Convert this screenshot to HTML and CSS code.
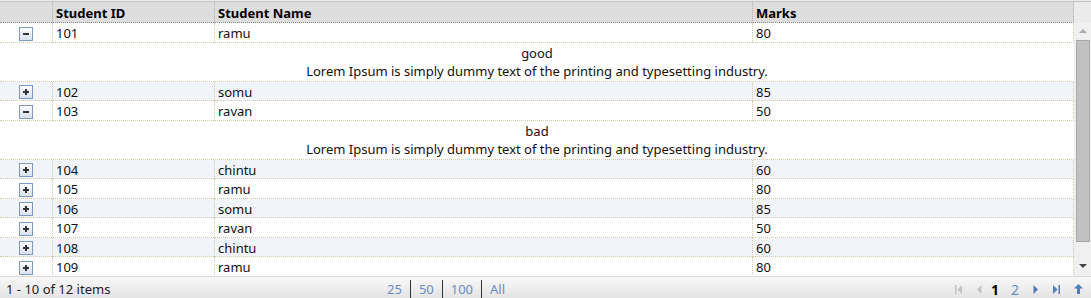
FILE: index.html
```html
<!DOCTYPE html>
<html lang="en">
<head>
  <meta charset="UTF-8">
  <title>Students</title>
  <link rel="stylesheet" href="styles.css">
</head>
<body>

  <div class="grid">
    <div class="grid-header">
      <table class="grid-table">
        <colgroup>
          <col class="col-hier"><col class="col-id"><col class="col-name"><col class="col-marks">
        </colgroup>
        <thead>
          <tr>
            <th class="hier"></th>
            <th>Student ID</th>
            <th>Student Name</th>
            <th>Marks</th>
          </tr>
        </thead>
      </table>
      <div class="scroll-corner"></div>
    </div>

    <div class="grid-content">
      <table class="grid-table">
        <colgroup>
          <col class="col-hier"><col class="col-id"><col class="col-name"><col class="col-marks">
        </colgroup>
        <tbody>
          <tr>
            <td class="hier"><span class="toggle minus"></span></td>
            <td>101</td><td>ramu</td><td>80</td>
          </tr>
          <tr class="detail">
            <td colspan="4">good<br>Lorem Ipsum is simply dummy text of the printing and typesetting industry.</td>
          </tr>
          <tr class="alt">
            <td class="hier"><span class="toggle plus"></span></td>
            <td>102</td><td>somu</td><td>85</td>
          </tr>
          <tr>
            <td class="hier"><span class="toggle minus"></span></td>
            <td>103</td><td>ravan</td><td>50</td>
          </tr>
          <tr class="detail">
            <td colspan="4">bad<br>Lorem Ipsum is simply dummy text of the printing and typesetting industry.</td>
          </tr>
          <tr class="alt">
            <td class="hier"><span class="toggle plus"></span></td>
            <td>104</td><td>chintu</td><td>60</td>
          </tr>
          <tr>
            <td class="hier"><span class="toggle plus"></span></td>
            <td>105</td><td>ramu</td><td>80</td>
          </tr>
          <tr class="alt">
            <td class="hier"><span class="toggle plus"></span></td>
            <td>106</td><td>somu</td><td>85</td>
          </tr>
          <tr>
            <td class="hier"><span class="toggle plus"></span></td>
            <td>107</td><td>ravan</td><td>50</td>
          </tr>
          <tr class="alt">
            <td class="hier"><span class="toggle plus"></span></td>
            <td>108</td><td>chintu</td><td>60</td>
          </tr>
          <tr>
            <td class="hier"><span class="toggle plus"></span></td>
            <td>109</td><td>ramu</td><td>80</td>
          </tr>
        </tbody>
      </table>

      <div class="vscroll">
        <span class="sb-arrow up"></span>
        <div class="sb-thumb"></div>
        <span class="sb-arrow down"></span>
      </div>
    </div>

    <div class="pager">
      <span class="pager-info">1 - 10 of 12 items</span>
      <span class="pager-sizes">
        <a>25</a><a>50</a><a>100</a><a>All</a>
      </span>
      <span class="pager-nav">
        <svg class="nav-icon off" width="8" height="9" viewBox="0 0 8 9"><rect x="0" y="0" width="1.5" height="9"/><path d="M7 0v9L2.5 4.5z"/></svg>
        <svg class="nav-icon off prev" width="5" height="9" viewBox="0 0 5 9"><path d="M4.5 0v9L0 4.5z"/></svg>
        <span class="page current">1</span>
        <span class="page">2</span>
        <svg class="nav-icon" width="5" height="9" viewBox="0 0 5 9"><path d="M0.5 0v9L5 4.5z"/></svg>
        <svg class="nav-icon" width="8" height="9" viewBox="0 0 8 9"><path d="M1 0v9L5.5 4.5z"/><rect x="6.5" y="0" width="1.5" height="9"/></svg>
        <svg class="nav-icon top" width="9" height="10" viewBox="0 0 9 10"><path d="M4.5 0L9 4.5H6V10H3V4.5H0z"/></svg>
      </span>
    </div>
  </div>

</body>
</html>
```

FILE: styles.css
```css
body {
  margin: 0;
  background: #fff;
  font-family: "Noto Sans", "Open Sans", sans-serif;
  font-size: 13px;
  color: #111;
}
.grid {
  width: 1091px;
  height: 298px;
  display: flex;
  flex-direction: column;
  overflow: hidden;
}
.grid-header {
  display: flex;
  padding-top: 2px;
  background: linear-gradient(#ececec 0 1px, #c4c4c4 1px 2px, #dddddd 2px);
}
.scroll-corner {
  width: 17px;
  background: #ebebeb;
}
.grid-table {
  width: 1074px;
  table-layout: fixed;
  border-collapse: separate;
  border-spacing: 0;
}
.col-hier { width: 52px; }
.col-id { width: 162px; }
.col-name { width: 538px; }
.col-marks { width: 322px; }

.grid-table th,
.grid-table td {
  box-sizing: border-box;
  padding: 0 3px;
  text-align: left;
  white-space: nowrap;
  overflow: hidden;
}
.grid-table th {
  height: 21px;
  padding-top: 2px;
  line-height: 17px;
  font-weight: bold;
  color: #000;
  border-bottom: 1px dotted #8f8f8f;
  border-left: 1px dotted #b0b0b0;
}
.grid-table th:last-child {
  border-right: 1px dotted #b0b0b0;
}
.grid-table td {
  height: 19.5px;
  padding-top: 3px;
  line-height: 15px;
  border-bottom: 1px dotted #d3c8a9;
  border-left: 1px dotted #d3c8a9;
}
.grid-table td:last-child {
  border-right: 1px dotted #d3c8a9;
}
.grid-table th.hier,
.grid-table td.hier {
  border-left: none;
  text-align: center;
  padding: 1px 0 0;
}
.grid-table tr.alt td {
  background: #f1f4f9;
}
.grid-table tr.detail td {
  height: 39px;
  padding: 1px 0 0;
  line-height: 18.5px;
  text-align: center;
  border-left: none;
  border-right: none;
}

.toggle {
  display: inline-block;
  position: relative;
  width: 12px;
  height: 12px;
  vertical-align: middle;
  border: 1px solid #7d99c4;
  background: linear-gradient(#ffffff, #d9e1ec);
}
.toggle::before,
.toggle::after {
  content: "";
  position: absolute;
  background: #333;
}
.toggle::before {
  left: 3px;
  top: 5px;
  width: 6px;
  height: 2px;
}
.toggle.plus::after {
  left: 5px;
  top: 3px;
  width: 2px;
  height: 6px;
}

.grid-content {
  flex: 1;
  display: flex;
  overflow: hidden;
}
.vscroll {
  width: 17px;
  background: #f0f0f0;
  display: flex;
  flex-direction: column;
  align-items: center;
}
.sb-arrow {
  width: 0;
  height: 0;
  border-left: 4px solid transparent;
  border-right: 4px solid transparent;
}
.sb-arrow.up {
  margin: 6px 0 7px;
  border-bottom: 4px solid #a8a8a8;
}
.sb-arrow.down {
  margin: auto 0 8px;
  border-top: 4px solid #444;
}
.sb-thumb {
  box-sizing: border-box;
  width: 14px;
  height: 202px;
  background: #c1c1c1;
  border: 1px solid #a9a9a9;
}

.pager {
  box-sizing: border-box;
  height: 22px;
  padding-top: 3px;
  display: flex;
  align-items: center;
  border-top: 1px solid #d9d9d9;
  background: linear-gradient(#f8f8f8, #e4e4e4);
  color: #222;
}
.pager-info {
  width: 381px;
  padding-left: 6px;
}
.pager-sizes a {
  color: #6b8cbf;
  padding: 0 8px;
  border-left: 1px solid #333;
  line-height: 12px;
}
.pager-sizes a:first-child {
  border-left: none;
  padding-left: 0;
}
.pager-nav {
  margin-left: auto;
  padding-right: 8px;
  display: flex;
  align-items: center;
  gap: 14px;
}
.nav-icon {
  fill: #4f7fb8;
}
.nav-icon.off {
  fill: #c4c4c4;
}
.nav-icon.prev {
  margin-right: -5px;
}
.page {
  color: #6b8cbf;
  font-size: 14px;
}
.page.current {
  color: #000;
  font-weight: bold;
  margin-right: -2px;
}
```
